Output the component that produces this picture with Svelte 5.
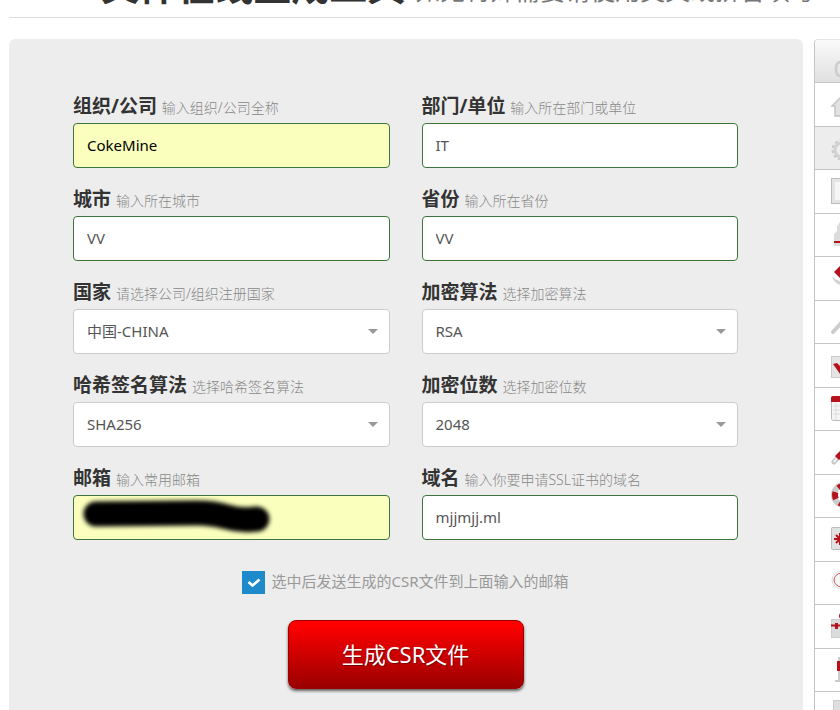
<script>
  const fields = [
    { id: 'org', label: '组织/公司', hint: '输入组织/公司全称', value: 'CokeMine', filled: true },
    { id: 'dept', label: '部门/单位', hint: '输入所在部门或单位', value: 'IT' },
    { id: 'city', label: '城市', hint: '输入所在城市', value: 'VV' },
    { id: 'province', label: '省份', hint: '输入所在省份', value: 'VV' },
    { id: 'country', label: '国家', hint: '请选择公司/组织注册国家', options: ['中国-CHINA'] },
    { id: 'algorithm', label: '加密算法', hint: '选择加密算法', options: ['RSA'] },
    { id: 'hash', label: '哈希签名算法', hint: '选择哈希签名算法', options: ['SHA256'] },
    { id: 'bits', label: '加密位数', hint: '选择加密位数', options: ['2048'] },
    { id: 'email', label: '邮箱', hint: '输入常用邮箱', value: '', filled: true, masked: true },
    { id: 'domain', label: '域名', hint: '输入你要申请SSL证书的域名', value: 'mjjmjj.ml' }
  ];
  const tools = [
    'home', 'gear', 'panel', 'stamp', 'cube', 'pen', 'check', 'calendar',
    'brush', 'help', 'flower', 'lens', 'kit', 'flag', 'card'
  ];
</script>

<div class="page">
  <header>
    <h1>CSR文件在线生成工具 <small>如无特殊需要请使用英文或拼音填写</small></h1>
  </header>

  <div class="layout">
    <main>
      <form onsubmit={(e) => e.preventDefault()}>
        <div class="grid">
          {#each fields as f}
            <div class="field">
              <label for={f.id}>{f.label} <small>{f.hint}</small></label>
              <div class="control">
                {#if f.options}
                  <select id={f.id}>
                    {#each f.options as o}<option>{o}</option>{/each}
                  </select>
                  <svg class="caret" viewBox="0 0 10 5" aria-hidden="true"><path d="M0 0h10L5 5z" fill="#999" /></svg>
                {:else}
                  <input id={f.id} type="text" value={f.value} class:filled={f.filled} />
                {/if}
                {#if f.masked}
                  <svg class="mask" viewBox="0 0 200 40" aria-hidden="true">
                    <path d="M21 17 L122 16 Q138 16 152 20 T182 22" />
                  </svg>
                {/if}
              </div>
            </div>
          {/each}
        </div>

        <label class="send">
          <input type="checkbox" checked />
          <svg viewBox="0 0 23 23" aria-hidden="true"><path d="M6.5 11l4 3.5 7-6" fill="none" stroke="#fff" stroke-width="2.6" /></svg>
          <span>选中后发送生成的CSR文件到上面输入的邮箱</span>
        </label>

        <button type="submit">生成CSR文件</button>
      </form>
    </main>

    <nav aria-label="工具">
      <div class="head">
        <svg viewBox="0 0 25 43" aria-hidden="true"><path d="M30 22h-4q-5 0-5 7t5 7h4" fill="none" stroke="#ccc" stroke-width="2.5" /></svg>
      </div>
      {#each tools as t}
        <a href="#{t}" class:active={t === 'gear'} aria-label={t}>
          <svg viewBox="0 0 25 43" aria-hidden="true">
            {#if t === 'home'}
              <path d="M17 23L28 12l11 11h-4v10h-6v-7h-3v7h-6V23z" fill="#e2e2e2" stroke="#c4c4c4" stroke-width="1.5" />
            {:else if t === 'gear'}
              <circle cx="27" cy="23" r="9" fill="none" stroke="#ccc" stroke-width="3" stroke-dasharray="3 2" />
              <circle cx="27" cy="23" r="7" fill="#ededed" stroke="#d2d2d2" stroke-width="3" />
            {:else if t === 'panel'}
              <rect x="16.5" y="8.5" width="26" height="25" fill="#e4e4e4" stroke="#bdbdbd" />
              <path d="M20 12h10v18H20z" fill="#f6f6f6" />
            {:else if t === 'stamp'}
              <path d="M19 32V20l3-3v-5l3-4h4v24z" fill="#dcdcdc" />
              <path d="M19 28h10" stroke="#b5121b" stroke-width="2" />
            {:else if t === 'cube'}
              <path d="M19 15l9-9v18z" fill="#b5121b" />
              <path d="M17 19q2 8 11 10v-4q-7-1-11-6z" fill="#d4d4d4" />
            {:else if t === 'pen'}
              <path d="M18 31L29 19" stroke="#ccc" stroke-width="4" stroke-linecap="round" />
            {:else if t === 'check'}
              <rect x="16.5" y="12.5" width="22" height="21" fill="#e4e6e6" stroke="#ccc" />
              <path d="M18 20l4-1 6 6v5h-3z" fill="#b5121b" />
            {:else if t === 'calendar'}
              <rect x="16.5" y="8.5" width="24" height="24" rx="2" fill="#f5f5f5" stroke="#bbb" />
              <path d="M16 14v-4q0-2 2-2h12v6z" fill="#b5121b" />
              <path d="M18 18h10M18 22h10M18 26h10M21 15v17" stroke="#ddd" />
            {:else if t === 'brush'}
              <path d="M19 31l5-6" stroke="#c8c8c8" stroke-width="5" stroke-linecap="round" />
              <path d="M19 31l3-4" stroke="#f5f5f5" stroke-width="2" />
              <path d="M20 25l8-8v9l-4 3z" fill="#b5121b" />
            {:else if t === 'help'}
              <circle cx="29" cy="20" r="10" fill="none" stroke="#ccc" stroke-width="6" />
              <circle cx="29" cy="20" r="9" fill="none" stroke="#b5121b" stroke-width="6" stroke-dasharray="7 5" />
            {:else if t === 'flower'}
              <rect x="16.5" y="9.5" width="24" height="22" rx="1" fill="#e1e3e3" stroke="#bbb" />
              <path d="M19 21h12M25 15v12M21 17l8 8M21 25l8-8" stroke="#b5121b" stroke-width="2" />
            {:else if t === 'lens'}
              <ellipse cx="27" cy="18" rx="10" ry="9" fill="#fff" stroke="#ddd" />
              <ellipse cx="27" cy="18" rx="8" ry="7" fill="#f5f5f5" stroke="#c9535a" />
            {:else if t === 'kit'}
              <rect x="16.5" y="14.5" width="24" height="18" fill="#dadcdc" stroke="#ccc" />
              <circle cx="27" cy="11" r="3" fill="#b5121b" />
              <path d="M16 20.5h10" stroke="#b5121b" stroke-width="2" />
              <path d="M20 18h3v6h-3z" fill="#b5121b" />
            {:else if t === 'flag'}
              <path d="M24 8v24M20 32h8" stroke="#ccc" stroke-width="2" />
              <path d="M22 12h6v10h-6z" fill="#b5121b" />
            {:else}
              <rect x="18.5" y="8.5" width="22" height="22" fill="#dedede" stroke="#ccc" />
            {/if}
          </svg>
        </a>
      {/each}
    </nav>
  </div>
</div>

<style>
  :global(body) {
    margin: 0;
    background: #fff;
  }
  .page {
    box-sizing: border-box;
    height: 100vh;
    overflow: hidden;
    padding-left: 9px;
    font-family: 'Noto Sans', 'Noto Sans CJK SC', sans-serif;
    color: #333;
  }
  header {
    display: flex;
    align-items: flex-end;
    height: 17px;
    overflow: hidden;
    border-bottom: 1px solid #ddd;
  }
  h1 {
    flex: none;
    margin: 0;
    padding-left: 22px;
    font-size: 38px;
    line-height: 54px;
    font-weight: 700;
    white-space: nowrap;
  }
  h1 small {
    font-size: 25px;
    font-weight: 400;
    color: #777;
  }
  .layout {
    display: flex;
    gap: 11px;
    margin-top: 21px;
  }
  main {
    flex: 1;
    min-width: 0;
    padding: 53px 65px 64px 64px;
    background: #ededed;
    border-radius: 6px;
  }
  form {
    display: flex;
    flex-direction: column;
    align-items: center;
  }
  .grid {
    display: grid;
    grid-template-columns: 1fr 1fr;
    gap: 17px 32px;
    width: 100%;
  }
  .field label {
    display: block;
    height: 28px;
    margin-bottom: 3px;
    font-size: 19px;
    line-height: 28px;
    font-weight: 700;
    white-space: nowrap;
  }
  .field small {
    font-size: 14px;
    font-weight: 300;
    color: #888;
  }
  .control {
    position: relative;
  }
  .control input,
  .control select {
    appearance: none;
    display: block;
    box-sizing: border-box;
    width: 100%;
    height: 45px;
    margin: 0;
    padding: 0 13px 2px;
    border: 1px solid #ccc;
    border-radius: 4px;
    background: #fff;
    color: #555;
    font: inherit;
    font-size: 15px;
  }
  .control input {
    border-color: #3c763d;
  }
  .control input.filled {
    background: #faffbd;
    color: #000;
  }
  .caret {
    position: absolute;
    top: 20px;
    right: 12px;
    width: 10px;
    height: 5px;
    pointer-events: none;
  }
  .mask {
    position: absolute;
    top: 2px;
    left: 2px;
    width: 200px;
    height: 40px;
    pointer-events: none;
  }
  .mask path {
    fill: none;
    stroke: #000;
    stroke-width: 25;
    stroke-linecap: round;
    filter: blur(2px);
  }
  .send {
    position: relative;
    display: flex;
    align-items: center;
    gap: 6px;
    height: 23px;
    margin-top: 31px;
    font-size: 15px;
    line-height: 21px;
    font-weight: 400;
    color: #999;
    white-space: nowrap;
  }
  .send span {
    padding-bottom: 2px;
  }
  .send input {
    appearance: none;
    width: 23px;
    height: 23px;
    margin: 0;
    background: #1f8acb;
  }
  .send svg {
    position: absolute;
    top: 0;
    left: 0;
    width: 23px;
    height: 23px;
    opacity: 0;
    pointer-events: none;
  }
  .send input:checked + svg {
    opacity: 1;
  }
  button {
    width: 236px;
    height: 69px;
    margin-top: 26px;
    padding: 0 0 4px;
    border: 1px solid #9c0000;
    border-radius: 8px;
    background: linear-gradient(#f00 5%, #900);
    box-shadow: 0 2px 3px rgba(0, 0, 0, 0.6);
    color: #fff;
    font: inherit;
    font-size: 22px;
    text-shadow: 1px 1px 1px rgba(0, 0, 0, 0.4);
  }
  nav {
    flex: none;
    width: 25px;
    overflow: hidden;
    border-left: 1px solid #c4c4c4;
    border-top: 1px solid #e4e4e4;
    border-top-left-radius: 4px;
  }
  .head {
    height: 42px;
    border-bottom: 1px solid #c4c4c4;
    background: linear-gradient(#fafafa, #e0e0e0);
  }
  nav a {
    display: block;
    height: 43px;
    border-bottom: 1px solid #c4c4c4;
  }
  nav a:nth-of-type(even) {
    height: 42px;
  }
  nav a.active {
    background: #ededed;
  }
  nav svg {
    display: block;
    width: 25px;
    height: 43px;
  }
</style>
